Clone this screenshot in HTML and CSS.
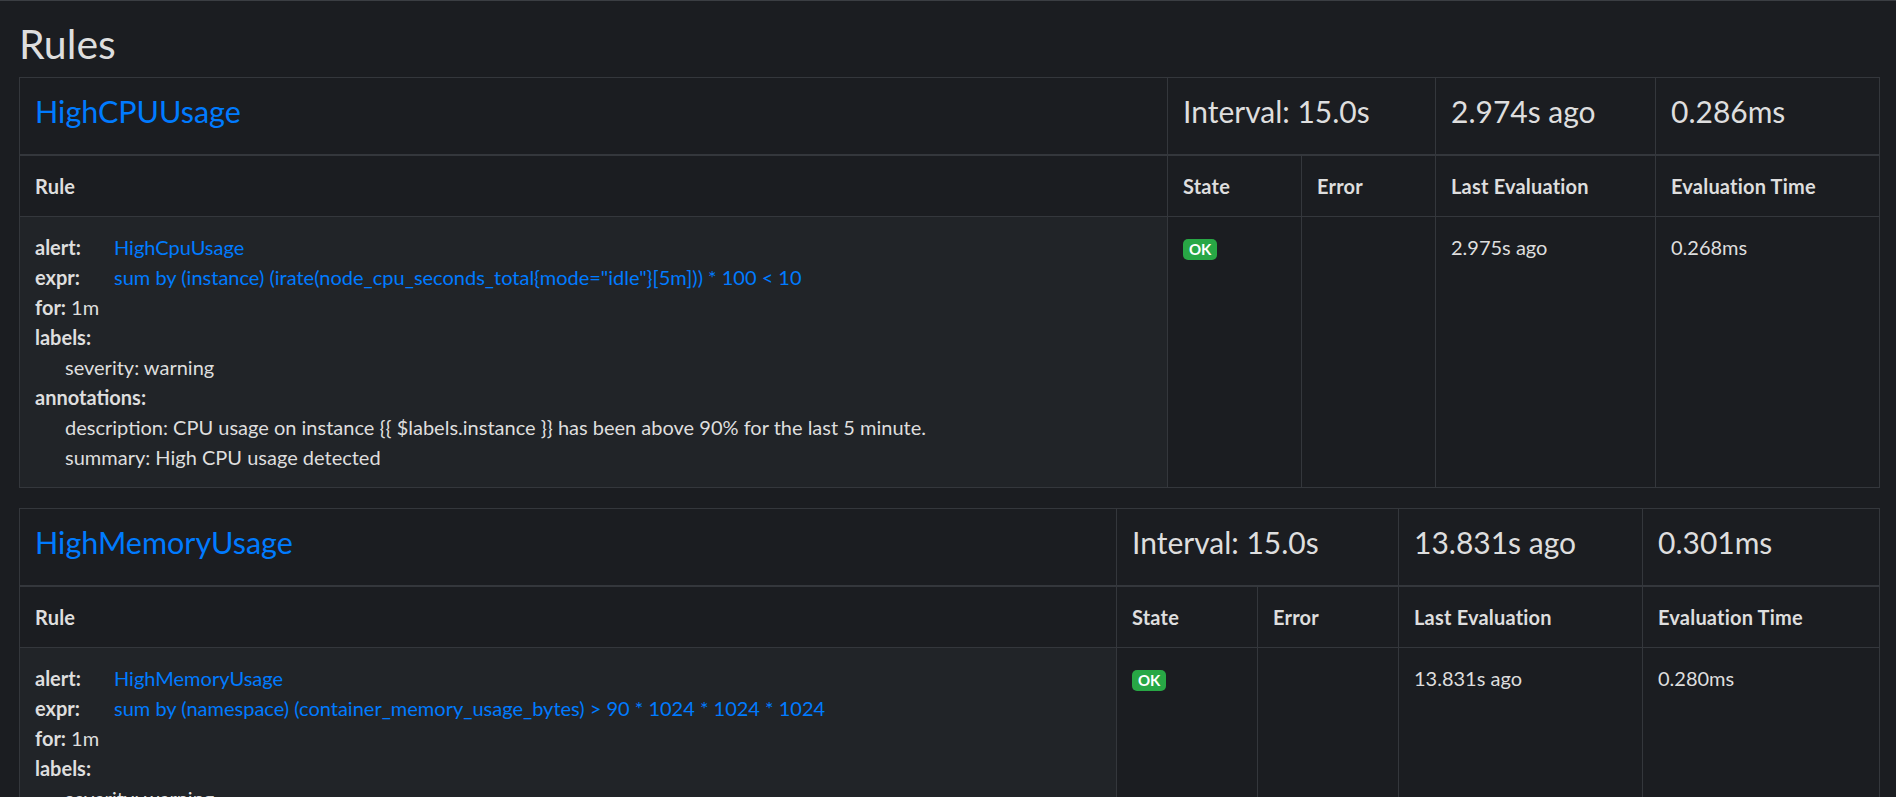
FILE: index.html
```html
<!DOCTYPE html>
<html lang="en">
<head>
<meta charset="utf-8">
<title>Rules</title>
<link rel="stylesheet" href="styles.css">
</head>
<body>
<main class="page">
  <h2 class="page-title">Rules</h2>

  <table class="rule-group group-cpu">
    <colgroup>
      <col class="c-rule"><col class="c-state"><col class="c-error"><col class="c-last"><col class="c-time">
    </colgroup>
    <thead>
      <tr class="group-head">
        <th><h4 class="group-name"><a href="#">HighCPUUsage</a></h4></th>
        <th colspan="2"><h4 class="group-stat">Interval: 15.0s</h4></th>
        <th><h4 class="group-stat">2.974s ago</h4></th>
        <th><h4 class="group-stat">0.286ms</h4></th>
      </tr>
    </thead>
    <tbody>
      <tr class="col-head">
        <th>Rule</th><th>State</th><th>Error</th><th>Last Evaluation</th><th>Evaluation Time</th>
      </tr>
      <tr class="rule-row">
        <td class="rule-cell">
          <div><strong class="key key-fixed">alert:</strong><a href="#">HighCpuUsage</a></div>
          <div><strong class="key key-fixed">expr:</strong><a href="#">sum by (instance) (irate(node_cpu_seconds_total{mode="idle"}[5m])) * 100 &lt; 10</a></div>
          <div><strong class="key">for:</strong> 1m</div>
          <div><strong class="key">labels:</strong></div>
          <div class="nested">severity: warning</div>
          <div><strong class="key">annotations:</strong></div>
          <div class="nested">description: CPU usage on instance {{ $labels.instance }} has been above 90% for the last 5 minute.</div>
          <div class="nested">summary: High CPU usage detected</div>
        </td>
        <td><span class="badge">OK</span></td>
        <td></td>
        <td>2.975s ago</td>
        <td>0.268ms</td>
      </tr>
    </tbody>
  </table>

  <table class="rule-group group-mem">
    <colgroup>
      <col class="c-rule"><col class="c-state"><col class="c-error"><col class="c-last"><col class="c-time">
    </colgroup>
    <thead>
      <tr class="group-head">
        <th><h4 class="group-name"><a href="#">HighMemoryUsage</a></h4></th>
        <th colspan="2"><h4 class="group-stat">Interval: 15.0s</h4></th>
        <th><h4 class="group-stat">13.831s ago</h4></th>
        <th><h4 class="group-stat">0.301ms</h4></th>
      </tr>
    </thead>
    <tbody>
      <tr class="col-head">
        <th>Rule</th><th>State</th><th>Error</th><th>Last Evaluation</th><th>Evaluation Time</th>
      </tr>
      <tr class="rule-row">
        <td class="rule-cell">
          <div><strong class="key key-fixed">alert:</strong><a href="#">HighMemoryUsage</a></div>
          <div><strong class="key key-fixed">expr:</strong><a href="#">sum by (namespace) (container_memory_usage_bytes) &gt; 90 * 1024 * 1024 * 1024</a></div>
          <div><strong class="key">for:</strong> 1m</div>
          <div><strong class="key">labels:</strong></div>
          <div class="nested">severity: warning</div>
          <div><strong class="key">annotations:</strong></div>
          <div class="nested">description: Memory usage in namespace {{ $labels.namespace }} has been above 90GB for the last 5 minute.</div>
          <div class="nested">summary: High memory usage detected</div>
        </td>
        <td><span class="badge">OK</span></td>
        <td></td>
        <td>13.831s ago</td>
        <td>0.280ms</td>
      </tr>
    </tbody>
  </table>
</main>
</body>
</html>
```

FILE: styles.css
```css
* {
  box-sizing: border-box;
}

html,
body {
  margin: 0;
  padding: 0;
}

body {
  background: #1b1d21;
  color: #dedede;
  font-family: Lato, "Noto Sans", sans-serif;
  font-size: 20px;
  line-height: 30px;
  border-top: 1px solid #3b3e43;
}

a {
  color: #007bff;
  text-decoration: none;
}

.page {
  padding: 0 16px 0 19px;
}

.page-title {
  font-size: 41px;
  line-height: 48px;
  font-weight: 400;
  margin: 19px 0 9px;
}

.rule-group {
  width: 100%;
  border-collapse: collapse;
  table-layout: fixed;
  margin-bottom: 20px;
}

.rule-group th,
.rule-group td {
  border: 1px solid #34373c;
  padding: 15px;
  text-align: left;
  vertical-align: top;
}

.group-head th {
  vertical-align: baseline;
  border-bottom-width: 2px;
  font-weight: 400;
}

.group-name,
.group-stat {
  font-size: 30px;
  line-height: 36px;
  font-weight: 400;
  margin: 0 0 10px;
}

.group-name {
  font-size: 30.5px;
}

.col-head th {
  font-weight: 700;
  letter-spacing: 0.2px;
}

.rule-cell {
  background: #212428;
}

.key {
  font-weight: 700;
}

.key-fixed {
  display: inline-block;
  width: 79px;
}

.nested {
  margin-left: 30px;
}

.badge {
  display: inline-block;
  font-size: 15px;
  font-weight: 700;
  line-height: 1;
  padding: 3px 6px;
  border-radius: 5px;
  background: #28a745;
  color: #fff;
}

.group-cpu .c-state,
.group-cpu .c-error {
  width: 134px;
}

.group-cpu .c-last {
  width: 220px;
}

.group-cpu .c-time {
  width: 224px;
}

.group-mem .c-state,
.group-mem .c-error {
  width: 141px;
}

.group-mem .c-last {
  width: 244px;
}

.group-mem .c-time {
  width: 237px;
}
```
